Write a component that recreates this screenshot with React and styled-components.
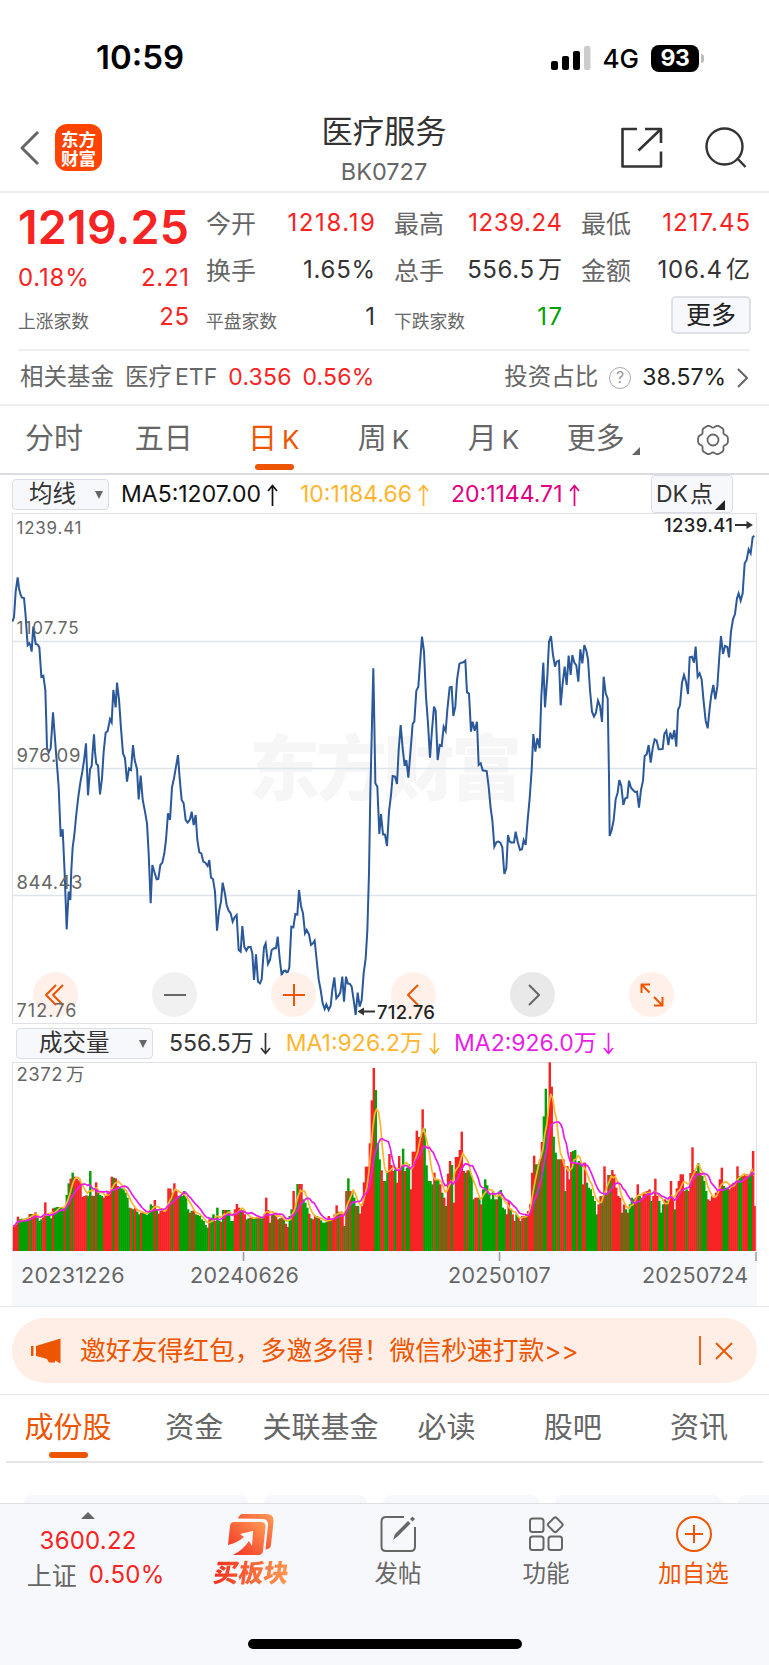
import React from "react";
import styled, { createGlobalStyle, css } from "styled-components";

const GlobalStyle = createGlobalStyle`
  * {
    box-sizing: border-box;
  }
  body {
    margin: 0;
    background: #fff;
    color: #333;
    font-family: Inter, "Noto Sans CJK SC", sans-serif;
  }
`;

const red = "#f82323";
const green = "#00a000";
const orange = "#ee5500";
const grey = "#666";

/* closing prices, three units per pixel */
const pricePoints = `
37,335 42,322 47,245 53,202 57,235 61,252 66,263 72,264 77,318 80,365 83,406 88,400 91,405 95,425 98,375
100,350 103,375 107,402 113,404 118,412 121,455 124,500 130,497 136,540 139,640 141,715 146,727 152,715
155,670 159,607 163,660 168,727 176,830 182,980 188,958 194,1090 200,1258 203,1200 206,1145 211,1170
214,1080 218,1012 223,975 229,912 235,860 241,818 247,785 252,752 258,700 261,780 264,856 270,778 275,768
279,710 282,673 285,725 289,762 294,766 300,853 306,805 311,725 317,668 323,663 330,627 335,637 340,540
347,592 351,518 357,568 363,655 369,730 375,745 381,815 387,775 393,780 399,705 404,750 411,777 416,868
422,797 428,868 435,905 441,940 446,1030 452,1180 457,1065 463,1085 470,1108 475,1107 481,1065 487,1058
493,1030 498,990 504,910 510,930 516,832 522,805 528,770 534,735 539,805 545,870 551,880 557,930 563,938
570,928 575,905 581,945 587,915 592,990 598,1027 604,1030 610,1055 616,1058 623,1068 628,1050 633,1103
639,1107 645,1145 651,1262 657,1205 663,1175 668,1118 675,1152 680,1185 686,1202 692,1210 698,1235
704,1222 710,1215 716,1320 722,1325 727,1248 733,1310 739,1322 745,1311 752,1311 757,1330 762,1410
768,1333 774,1415 780,1420 785,1408 792,1312 797,1300 804,1362 810,1350 815,1320 822,1315 828,1315
833,1280 839,1345 845,1395 851,1383 857,1382 862,1392 868,1372 874,1250 880,1252 886,1212 892,1214
897,1140 903,1188 909,1210 915,1270 920,1260 927,1273 933,1305 939,1300 944,1292 950,1350 956,1408
962,1440 968,1480 974,1497 979,1483 986,1500 992,1487 997,1440 1003,1402 1009,1465 1015,1458 1021,1447
1027,1400 1032,1475 1038,1400 1043,1420 1050,1422 1055,1430 1061,1470 1067,1515 1073,1448 1079,1490
1085,1470 1091,1390 1097,1345 1102,1262 1107,1090 1111,850 1116,640 1120,475 1123,640 1126,820 1132,830
1138,972 1143,912 1149,973 1155,974 1161,1008 1167,905 1173,855 1178,798 1185,800 1191,822 1196,720
1202,645 1208,715 1214,768 1219,750 1225,803 1231,730 1238,642 1243,634 1249,542 1255,530 1260,460
1266,380 1272,425 1278,560 1284,640 1290,743 1296,660 1302,590 1307,602 1313,750 1319,705 1325,708
1331,650 1337,663 1342,600 1349,532 1355,531 1360,618 1366,590 1371,510 1378,462 1384,458 1390,457
1396,452 1401,547 1407,551 1413,665 1418,635 1424,662 1431,635 1436,765 1442,760 1448,781 1454,782
1460,783 1466,830 1472,895 1477,930 1483,1010 1489,997 1495,995 1501,998 1507,1012 1513,1092 1519,1075
1524,975 1529,995 1535,998 1542,997 1547,965 1553,995 1560,1020 1566,1018 1571,990 1577,1005 1583,930
1589,865 1595,780 1600,672 1606,725 1612,685 1619,715 1624,560 1630,458 1635,592 1642,500 1647,395
1653,378 1659,435 1665,470 1670,455 1677,452 1682,586 1688,520 1694,470 1700,525 1706,437 1712,495
1717,435 1723,458 1729,466 1735,515 1741,418 1747,460 1753,405 1759,422 1764,448 1770,540 1776,605
1782,620 1788,608 1794,572 1800,588 1806,636 1811,500 1817,550 1823,565 1827,800 1829,978 1835,960
1841,930 1847,868 1853,848 1858,810 1864,828 1870,885 1876,865 1882,863 1887,812 1893,833 1899,840
1905,846 1911,845 1917,893 1923,840 1929,812 1934,738 1940,733 1946,705 1952,758 1958,715 1964,688
1970,692 1976,718 1982,718 1988,717 1993,672 1999,662 2005,705 2011,668 2017,688 2023,660 2029,710
2034,600 2040,586 2046,518 2052,495 2058,515 2064,552 2069,442 2076,440 2082,458 2087,410 2093,500
2099,490 2105,508 2111,575 2117,632 2123,655 2129,595 2134,555 2140,525 2146,568 2152,530 2158,440
2163,378 2169,432 2175,408 2182,411 2187,442 2193,365 2199,328 2205,312 2211,265 2216,250 2222,272
2228,250 2234,160 2240,150 2246,118 2252,130 2258,82 2263,77`;

/* traded volume per day, 566 is the full height of the panel */
const volumes = [
  75, 78, 103, 95, 97, 92, 95, 100, 111, 111, 111, 116, 100, 90, 95, 108, 146, 105, 105, 98,
  128, 130, 132, 132, 130, 128, 130, 168, 203, 217, 235, 223, 217, 212, 205, 162, 165, 167, 165, 240,
  166, 165, 206, 175, 168, 165, 160, 165, 180, 172, 223, 220, 218, 195, 190, 188, 185, 175, 160, 130,
  128, 125, 130, 118, 110, 115, 115, 115, 108, 115, 140, 135, 153, 125, 112, 120, 125, 118, 125, 188,
  187, 175, 203, 180, 165, 165, 165, 180, 165, 125, 115, 120, 122, 110, 108, 105, 95, 90, 78, 70,
  95, 100, 110, 90, 130, 90, 88, 123, 123, 123, 123, 90, 90, 125, 141, 130, 125, 122, 110, 95,
  98, 100, 102, 98, 100, 104, 100, 98, 110, 160, 123, 85, 110, 113, 115, 95, 98, 100, 95, 82,
  72, 105, 125, 180, 130, 201, 201, 201, 155, 145, 130, 112, 98, 95, 105, 105, 100, 92, 85, 85,
  88, 105, 95, 95, 110, 137, 118, 112, 112, 75, 180, 218, 180, 178, 160, 135, 135, 112, 135, 206,
  253, 253, 323, 452, 549, 483, 323, 275, 242, 210, 210, 240, 291, 258, 240, 245, 205, 285, 245, 307,
  240, 250, 260, 185, 298, 298, 361, 342, 342, 425, 367, 257, 210, 210, 200, 235, 215, 215, 200, 175,
  160, 135, 232, 270, 258, 145, 282, 282, 303, 358, 240, 235, 242, 242, 225, 155, 160, 160, 160, 140,
  185, 215, 197, 170, 155, 180, 155, 155, 178, 183, 130, 125, 110, 150, 125, 110, 90, 110, 100, 90,
  105, 105, 110, 120, 140, 235, 286, 260, 260, 275, 327, 404, 487, 404, 566, 493, 343, 295, 275, 275,
  275, 275, 180, 255, 215, 297, 300, 303, 262, 270, 265, 200, 265, 205, 190, 185, 165, 150, 110, 140,
  165, 165, 254, 170, 228, 228, 243, 230, 190, 165, 160, 115, 140, 125, 115, 140, 160, 155, 160, 200,
  165, 160, 175, 178, 180, 185, 150, 165, 217, 165, 150, 115, 140, 155, 150, 155, 210, 160, 125, 188,
  210, 230, 230, 180, 185, 180, 234, 311, 242, 240, 263, 235, 225, 210, 180, 155, 150, 165, 160, 175,
  182, 215, 250, 195, 190, 188, 185, 200, 205, 205, 254, 225, 225, 225, 230, 230, 225, 240, 300, 135,
];

/* days on which the bars change colour, the first run is red */
const flips = [
  3, 8, 9, 10, 12, 15, 17, 20, 21, 26, 27, 29, 30, 31, 38, 40, 41, 42, 43, 46, 51, 52, 54, 60, 61, 62,
  63, 65, 66, 72, 73, 74, 81, 82, 85, 90, 91, 92, 93, 100, 101, 103, 104, 106, 107, 108, 109, 113, 116,
  117, 119, 121, 122, 125, 126, 128, 131, 132, 133, 134, 136, 137, 138, 139, 141, 143, 144, 146, 148,
  151, 152, 153, 155, 156, 157, 161, 162, 163, 166, 167, 169, 170, 171, 172, 173, 175, 176, 177, 185,
  188, 190, 192, 195, 196, 199, 200, 201, 203, 210, 215, 216, 218, 219, 220, 221, 222, 224, 225, 231,
  232, 233, 236, 238, 239, 240, 247, 248, 252, 254, 255, 257, 258, 259, 260, 262, 263, 267, 268, 269,
  270, 271, 273, 276, 278, 279, 280, 282, 283, 286, 288, 289, 291, 293, 299, 301, 302, 303, 304, 305,
  306, 311, 312, 313, 314, 315, 318, 320, 321, 326, 327, 330, 333, 334, 335, 338, 339, 344, 345, 350,
  351, 352, 355, 363, 366, 371, 373, 376, 378,
];
const dayColor = (i) => (flips.filter((f) => f <= i).length % 2 ? green : "#f62424");

const step = 743 / volumes.length;

const average = (count) =>
  volumes
    .map((_, i) => {
      const part = volumes.slice(Math.max(0, i - count + 1), i + 1);
      const mean = part.reduce((a, b) => a + b, 0) / part.length;
      return `${((i + 0.5) * step).toFixed(1)},${(189 - mean / 3).toFixed(1)}`;
    })
    .join(" ");

const gearPath =
  "M" +
  Array(72)
    .fill(0)
    .map((_, i) => {
      const a = (i * Math.PI) / 36;
      const r = 14.1 + 1.3 * Math.cos(6 * a) - 0.5 * Math.cos(12 * a);
      return `${(17 + r * Math.cos(a)).toFixed(2)} ${(17 + r * Math.sin(a)).toFixed(2)}`;
    })
    .join("L") +
  "Z";

const Screen = styled.div`
  width: 769px;
  height: 1665px;
  display: flex;
  flex-direction: column;
  overflow: hidden;
  background: #fff;
  white-space: nowrap;
`;

const Text = styled.span`
  font-size: ${({ size }) => size || 24}px;
  font-weight: ${({ weight }) => weight || 400};
  color: ${({ color }) => color || "#333"};
  letter-spacing: ${({ gap }) => gap || 0}px;
  margin-right: ${({ gap }) => -(gap || 0)}px;
  line-height: 1.2;
`;

const StatusBar = styled.div`
  height: 106px;
  flex: none;
  display: flex;
  align-items: center;
  justify-content: space-between;
  padding: 10px 65px 0 96px;
`;
const StatusIcons = styled.div`
  display: flex;
  align-items: center;
`;
const Network = styled(Text)`
  margin: 2px 12px 0 12px;
`;
const Battery = styled.div`
  width: 48px;
  height: 27px;
  border-radius: 8px;
  background: #000;
  color: #fff;
  font-size: 23px;
  font-weight: 700;
  letter-spacing: -0.5px;
  line-height: 27px;
  text-align: center;
`;
const BatteryTip = styled.div`
  width: 3px;
  height: 9px;
  margin-left: 2px;
  border-radius: 0 4px 4px 0;
  background: #bbb;
`;

const Header = styled.header`
  height: 87px;
  flex: none;
  display: grid;
  grid-template-columns: 1fr auto 1fr;
  align-items: center;
  padding: 0 22px 2px 19px;
  border-bottom: 2px solid #eee;
`;
const HeaderSide = styled.div`
  display: flex;
  align-items: center;
  justify-content: ${({ end }) => (end ? "flex-end" : "flex-start")};
  gap: ${({ end }) => (end ? 40 : 14)}px;
`;
const Logo = styled.div`
  width: 47px;
  height: 47px;
  display: flex;
  flex-direction: column;
  align-items: center;
  justify-content: center;
  border-radius: 12px;
  background: #ff4400;
  color: #fff;
  font-family: "Noto Sans CJK SC", sans-serif;
  font-size: 17.5px;
  font-weight: 700;
  line-height: 19px;
`;
const Title = styled.div`
  display: flex;
  flex-direction: column;
  align-items: center;
  gap: 7px;
  padding: 5px 0 0 2px;
`;

const Quote = styled.section`
  height: 158px;
  flex: none;
  display: grid;
  grid-template-columns: 169px 169px 168px 169px;
  column-gap: 19px;
  margin: 0 19px 0 18px;
  border-bottom: 2px solid #eee;
`;
const QuoteColumn = styled.div`
  display: grid;
  grid-template-rows: ${({ main }) => (main ? "63px 39px 39px" : "47px 47px 47px")};
  padding-top: ${({ main }) => (main ? 3 : 7)}px;
`;
const Cell = styled.div`
  display: flex;
  align-items: center;
  justify-content: space-between;
`;
const SmallLabel = styled.span`
  font-size: 17.8px;
  color: ${grey};
  padding-top: 5px;
`;
const MoreButton = styled.div`
  width: 80px;
  height: 38px;
  margin: 2px -1px 0 auto;
  border: 2px solid #dfdfe6;
  border-radius: 5px;
  background: #f7f8fb;
  color: #222;
  font-size: 25px;
  line-height: 34px;
  text-align: center;
`;

const Related = styled.section`
  height: 55px;
  flex: none;
  display: flex;
  align-items: center;
  justify-content: space-between;
  padding: 0 20px;
  border-bottom: 2px solid #eee;
`;
const Group = styled.div`
  display: flex;
  align-items: center;
  gap: ${({ space }) => space || 11}px;
`;
const Help = styled.span`
  width: 22px;
  height: 22px;
  border: 1.5px solid #aaa;
  border-radius: 50%;
  color: #999;
  font-size: 16px;
  line-height: 19px;
  text-align: center;
`;

const Tabs = styled.nav`
  height: ${({ height }) => height}px;
  flex: none;
  display: flex;
  align-items: stretch;
  margin: 0 ${({ inset }) => inset || 0}px;
  border-bottom: 2px solid ${({ line }) => line};
`;
const Tab = styled.div`
  position: relative;
  flex: 1;
  display: flex;
  align-items: center;
  justify-content: center;
  gap: 7px;
  padding-right: 2px;
  color: ${grey};
  font-size: 29px;
  line-height: 1.2;
  ${({ active }) =>
    active &&
    css`
      color: ${orange};
      &::after {
        content: "";
        position: absolute;
        left: 50%;
        bottom: 3px;
        width: 39px;
        height: 6px;
        margin-left: -20px;
        border-radius: 3px;
        background: ${orange};
      }
    `}
`;
const Latin = styled.span`
  font-size: 26px;
  margin-left: -2px;
  padding-top: 1px;
`;
const Corner = styled.i`
  border: ${({ size }) => size / 2}px solid transparent;
  border-right-color: ${({ color }) => color};
  border-bottom-color: ${({ color }) => color};
  margin-top: ${({ drop }) => drop || 0}px;
`;

const LegendRow = styled.div`
  height: ${({ height }) => height}px;
  flex: none;
  display: flex;
  align-items: center;
  padding: 0 12px;
`;
const Select = styled.div`
  width: ${({ width }) => width}px;
  height: 31px;
  display: flex;
  align-items: center;
  justify-content: space-between;
  padding: 1px 5px 0 ${({ inset }) => inset || 16}px;
  margin: 0 ${({ after }) => after}px 0 ${({ before }) => before || 0}px;
  border: 1.5px solid #dcdce4;
  border-radius: 4px;
  background: #f7f8fb;
  &::after {
    content: "";
    border: 4.5px solid transparent;
    border-top: 8px solid #666;
    border-bottom: 0;
  }
`;
const LegendItem = styled.div`
  display: flex;
  align-items: center;
  gap: 6px;
  margin-right: ${({ after }) => after || 0}px;
  padding-top: 2px;
  color: ${({ color }) => color};
  font-size: 23px;
  line-height: 1.2;
`;
const DkButton = styled.div`
  width: 82px;
  height: 38px;
  display: flex;
  align-items: center;
  gap: 2px;
  margin: 0 24px 0 auto;
  padding: 2px 0 0 4px;
  border: 1.5px solid #dcdce4;
  border-radius: 4px;
  background: #f7f8fb;
`;

const Panel = styled.div`
  position: relative;
  width: 745px;
  height: ${({ height }) => height}px;
  flex: none;
  margin-left: 12px;
  svg {
    display: block;
  }
`;
const ChartButtons = styled.div`
  position: absolute;
  left: 21px;
  bottom: 7px;
  display: flex;
  gap: 74.2px;
`;
const RoundButton = styled.div`
  width: 45px;
  height: 45px;
  border-radius: 50%;
  background: ${({ bg }) => bg};
`;
const Labels = styled.svg`
  position: absolute;
  inset: 0;
`;

const DateTicks = styled.div`
  height: 0;
  flex: none;
  margin-left: 12px;
  svg {
    display: block;
    position: relative;
  }
`;
const Dates = styled.div`
  height: 55px;
  flex: none;
  display: grid;
  grid-template-columns: 170px 212px 247px 116px;
  width: 745px;
  margin-left: 12px;
  background: #f7f8fb;
  padding-top: 12px;
`;
const DateLabel = styled(Text)`
  padding-left: ${({ inset }) => inset}px;
`;

const BannerArea = styled.div`
  height: 89px;
  flex: none;
  padding: 11px 12px 0;
  border-top: 1.5px solid #e4e5e8;
  border-bottom: 1.5px solid #e4e5e8;
`;
const Banner = styled.div`
  height: 65px;
  display: flex;
  align-items: center;
  padding: 0 24px 0 19px;
  border-radius: 33px;
  background: #ffeee5;
`;
const BannerText = styled(Text)`
  flex: 1;
  margin-left: 18px;
  padding-top: 1px;
`;

const Chips = styled.div`
  flex: 1;
  display: flex;
  align-items: flex-end;
  gap: 16px;
  padding-left: 24px;
`;
const Chip = styled.div`
  width: ${({ width }) => width}px;
  height: 8px;
  flex: none;
  border-radius: 8px 8px 0 0;
  background: #f7f8fb;
`;

const Footer = styled.footer`
  height: 162px;
  flex: none;
  display: flex;
  flex-direction: column;
  align-items: center;
  justify-content: space-between;
  padding-bottom: 16px;
  border-top: 1.5px solid #dcdee2;
  background: #f7f8fb;
`;
const FooterItems = styled.div`
  width: 100%;
  display: grid;
  grid-template-columns: 176px 148px 148px 148px 147px;
`;
const FooterItem = styled.div`
  height: 90px;
  display: flex;
  flex-direction: column;
  align-items: center;
  gap: ${({ space }) => space || 0}px;
  padding-top: ${({ top }) => top || 9}px;
`;
const IndexValues = styled.div`
  display: flex;
  gap: 12px;
  padding: 5px 0 0 15px;
`;
const Up = styled.i`
  border: 7px solid transparent;
  border-bottom-color: ${grey};
  border-top: 0;
  margin-bottom: 8px;
`;
const BuyLabel = styled.span`
  margin-left: 3px;
  font-family: "Noto Sans CJK SC", sans-serif;
  font-size: 25px;
  font-weight: 900;
  line-height: 28px;
  transform: skewX(-8deg);
  background: linear-gradient(90deg, #f2301e, #ff9a50);
  background-clip: text;
  color: transparent;
`;
const HomeBar = styled.div`
  width: 274px;
  height: 10px;
  border-radius: 5px;
  background: #000;
`;

const Stroke = ({ w, h, d, color = "#666", width = 2, children }) => (
  <svg width={w} height={h} fill="none" stroke={color} strokeWidth={width}>
    {d && <path d={d} strokeLinejoin="round" />}
    {children}
  </svg>
);

const Legend = ({ color, after, down, children }) => (
  <LegendItem color={color} after={after}>
    {children}
    <Stroke
      w={11}
      h={23}
      color={color}
      width={1.7}
      d={down ? "M5.5 0V20M1 15L5.5 20.5L10 15" : "M5.5 22V2M1 7L5.5 1.5L10 7"}
    />
  </LegendItem>
);

const quotes = [
  [
    { label: "今开", value: "1218.19", color: red, gap: 1.6 },
    { label: "换手", value: "1.65%", gap: 0.7 },
    { label: "平盘家数", value: "1" },
  ],
  [
    { label: "最高", value: "1239.24", color: red, gap: 0.6 },
    { label: "总手", value: "556.5", unit: "万", gap: 0.6 },
    { label: "下跌家数", value: "17", color: green, gap: 1.5 },
  ],
  [
    { label: "最低", value: "1217.45", color: red, gap: 1 },
    { label: "金额", value: "106.4", unit: "亿", gap: 0.8 },
  ],
];

const chartLabels = [
  ["1239.41", 20.5, 17, 65],
  ["1107.75", 121, 17, 62],
  ["976.09", 249, 18.5, 64],
  ["844.43", 376, 18.5, 66],
  ["712.76", 503.5, 18, 60],
];

const peach = "#fff0e9";
const chartButtons = [
  [peach, orange, "M23 13L13 23L23 33M30 13L20 23L30 33"],
  ["#f1f1f1", grey, "M12 23H34"],
  [peach, orange, "M12 23H34M23 12V34"],
  [peach, orange, "M27 13L17 23L27 33"],
  ["#e9e9e9", grey, "M19 13L29 23L19 33"],
  [peach, orange, "M21 12.5H12.5V21M12.5 12.5L20.5 20.5M25 25L33 33M33.5 25V33.5H25"],
];

const PriceChart = () => (
  <Panel height={511}>
    <svg width="745" height="511">
      <rect x="0.5" y="0.5" width="744" height="510" fill="#fff" stroke="#dfe1e6" />
      <text
        x="237"
        y="281"
        fontFamily="Noto Sans CJK SC"
        fontSize="71"
        fontWeight="900"
        fill="#f6f6f6"
        textLength="273"
      >
        东方财富
      </text>
      {[128.5, 255.5, 382.5].map((y) => (
        <path key={y} d={`M0 ${y}H745`} stroke="#dde4ec" strokeWidth="1.5" />
      ))}
      <polyline
        points={pricePoints}
        transform="translate(-12 -3) scale(.33333)"
        fill="none"
        stroke="#2a5899"
        strokeWidth="6"
      />
    </svg>
    <ChartButtons>
      {chartButtons.map(([bg, color, d]) => (
        <RoundButton key={d} bg={bg}>
          <Stroke w={45} h={45} d={d} color={color} />
        </RoundButton>
      ))}
    </ChartButtons>
    <Labels width="745" height="511">
      {chartLabels.map(([label, y, size, width]) => (
        <text key={label} x="4.5" y={y} fontSize={size} fill={grey} textLength={width}>
          {label}
        </text>
      ))}
      <text x="652" y="18.5" fontSize="18.5" fontWeight="500" fill="#222" textLength="69">
        1239.41
      </text>
      <path d="M723 12H738" stroke="#333" strokeWidth="2" />
      <path d="M734.5 8L741 12L734.5 16Z" fill="#333" />
      <text x="365" y="505.5" fontSize="18.5" fontWeight="500" fill="#222" textLength="58">
        712.76
      </text>
      <path d="M349 498.5H363" stroke="#333" strokeWidth="2" />
      <path d="M352 494.5L345.5 498.5L352 502.5Z" fill="#333" />
    </Labels>
  </Panel>
);

const VolumeChart = () => (
  <Panel height={189}>
    <svg width="745" height="189">
      <rect x="0.5" y="0.5" width="744" height="190" fill="#fff" stroke="#dfe1e6" />
      {volumes.map((value, i) => (
        <rect
          key={i}
          x={0.8 + i * step}
          y={189 - value / 3}
          width={i < volumes.length - 1 ? step + 0.5 : step}
          height={value / 3}
          fill={dayColor(i)}
        />
      ))}
      <g fill="none" strokeWidth="1.7" strokeLinejoin="round">
        <polyline points={average(5)} stroke="#ffb52e" />
        <polyline points={average(10)} stroke="#e81ee8" />
      </g>
      <text x="4.5" y="19" fontSize="18.5" fill={grey} textLength="46">
        2372
      </text>
      <text x="54" y="19" fontSize="18.5" fill={grey}>
        万
      </text>
    </svg>
  </Panel>
);

const App = () => {
  return (
    <Screen>
      <GlobalStyle />
      <StatusBar>
        <Text size={33} weight={600} color="#000">
          10:59
        </Text>
        <StatusIcons>
          <svg width="40" height="25">
            <rect x="0" y="15" width="7" height="9" rx="2" />
            <rect x="11" y="10" width="7" height="14" rx="2" />
            <rect x="22" y="5" width="7" height="19" rx="2" />
            <rect x="33" y="0" width="6.5" height="24" rx="2" fill="#ccc" />
          </svg>
          <Network size={26} weight={500} color="#000">
            4G
          </Network>
          <Battery>93</Battery>
          <BatteryTip />
        </StatusIcons>
      </StatusBar>

      <Header>
        <HeaderSide>
          <Stroke w={22} h={36} d="M19 2L3 18L19 34" width={3} />
          <Logo>
            <span>东方</span>
            <span>财富</span>
          </Logo>
        </HeaderSide>
        <Title>
          <Text size={31.3}>医疗服务</Text>
          <Text size={23.5} color={grey}>
            BK0727
          </Text>
        </Title>
        <HeaderSide end>
          <Stroke
            w={44}
            h={42}
            d="M17 2H2.5V39.5H41V24.5M25 2H41V16M18.5 23.5L41 2"
            color="#333"
            width={2.6}
          />
          <Stroke w={43} h={42} color="#333" width={2.4} d="M33 31L41.5 40">
            <circle cx="20.5" cy="19.5" r="18" />
          </Stroke>
        </HeaderSide>
      </Header>

      <Quote>
        <QuoteColumn main>
          <Cell>
            <Text size={46.5} weight={600} color={red} gap={0.2}>
              1219.25
            </Text>
          </Cell>
          <Cell>
            <Text color={red} gap={0.8}>
              0.18%
            </Text>
            <Text color={red} gap={0.7}>
              2.21
            </Text>
          </Cell>
          <Cell>
            <SmallLabel>上涨家数</SmallLabel>
            <Text color={red} gap={0.5}>
              25
            </Text>
          </Cell>
        </QuoteColumn>
        {quotes.map((column, i) => (
          <QuoteColumn key={i}>
            {column.map(({ label, value, color, gap, unit }) => (
              <Cell key={label}>
                {label.length > 2 ? (
                  <SmallLabel>{label}</SmallLabel>
                ) : (
                  <Text size={25} color={grey}>
                    {label}
                  </Text>
                )}
                <Group space={4}>
                  <Text color={color} gap={gap}>
                    {value}
                  </Text>
                  {unit && <Text>{unit}</Text>}
                </Group>
              </Cell>
            ))}
            {column.length === 2 && <MoreButton>更多</MoreButton>}
          </QuoteColumn>
        ))}
      </Quote>

      <Related>
        <Group>
          <Text size={23.5} color={grey}>
            相关基金
          </Text>
          <Group space={3}>
            <Text size={23.5} color={grey}>
              医疗
            </Text>
            <Text size={23} color={grey}>
              ETF
            </Text>
          </Group>
          <Text size={23} color={red} gap={0.2}>
            0.356
          </Text>
          <Text size={23} color={red} gap={0.2}>
            0.56%
          </Text>
        </Group>
        <Group>
          <Text size={23.5} color={grey}>
            投资占比
          </Text>
          <Help>?</Help>
          <Text size={23} color="#222">
            38.57%
          </Text>
          <Stroke w={12} h={20} d="M1 1L10 10L1 19" />
        </Group>
      </Related>

      <Tabs height={69} line="#dadbe3">
        <Tab>分时</Tab>
        <Tab>五日</Tab>
        <Tab active>
          日<Latin>K</Latin>
        </Tab>
        <Tab>
          周<Latin>K</Latin>
        </Tab>
        <Tab>
          月<Latin>K</Latin>
        </Tab>
        <Tab>
          更多
          <Corner size={8} color={grey} drop={22} />
        </Tab>
        <Tab>
          <Stroke w={34} h={34} d={gearPath} width={1.8}>
            <circle cx="17" cy="17" r="5.5" />
          </Stroke>
        </Tab>
      </Tabs>

      <LegendRow height={38}>
        <Select width={97} after={12}>
          <Text size={23.5}>均线</Text>
        </Select>
        <Legend color="#111" after={22}>
          MA5:1207.00
        </Legend>
        <Legend color="#ffb52e" after={22}>
          10:1184.66
        </Legend>
        <Legend color="#e0007f">20:1144.71</Legend>
        <DkButton>
          <Text size={23}>DK</Text>
          <Text size={23}>点</Text>
          <Corner size={11} color="#222" drop={20} />
        </DkButton>
      </LegendRow>
      <PriceChart />
      <LegendRow height={38}>
        <Select width={137} inset={22} before={4} after={16}>
          <Text size={23.5}>成交量</Text>
        </Select>
        <Legend down color="#333" after={15}>
          556.5万
        </Legend>
        <Legend down color="#ffb52e" after={14}>
          MA1:926.2万
        </Legend>
        <Legend down color="#e81ee8">
          MA2:926.0万
        </Legend>
      </LegendRow>
      <VolumeChart />
      <DateTicks>
        <svg width="745" height="10">
          <path d="M231.5 1V10M487.5 1V10M744 1V10" stroke="#999" strokeWidth="1.5" />
        </svg>
      </DateTicks>
      <Dates>
        <DateLabel size={21.5} color={grey} gap={0.3} inset={9}>
          20231226
        </DateLabel>
        <DateLabel size={21.5} color={grey} gap={0.3} inset={8}>
          20240626
        </DateLabel>
        <DateLabel size={21.5} color={grey} gap={0.3} inset={54}>
          20250107
        </DateLabel>
        <DateLabel size={21.5} color={grey} gap={0.2} inset={1}>
          20250724
        </DateLabel>
      </Dates>

      <BannerArea>
        <Banner>
          <svg width="31" height="26" fill={orange}>
            <path d="M0 8H2.5V18H0ZM5 8L29.5 0.5V25.5L24 22.5V24.5H18L16 21L11 19.5L5 18Z" />
          </svg>
          <BannerText size={25.8} color={orange}>
            邀好友得红包，多邀多得！微信秒速打款&gt;&gt;
          </BannerText>
          <Stroke w={34} h={30} color={orange} width={1.8} d="M1 0V29M17 7L33 23M33 7L17 23" />
        </Banner>
      </BannerArea>

      <Tabs height={68} inset={6} line="#e4e5e8">
        <Tab active>成份股</Tab>
        <Tab>资金</Tab>
        <Tab>关联基金</Tab>
        <Tab>必读</Tab>
        <Tab>股吧</Tab>
        <Tab>资讯</Tab>
      </Tabs>
      <Chips>
        <Chip width={224} />
        <Chip width={103} />
        <Chip width={156} />
        <Chip width={167} />
        <Chip width={60} />
      </Chips>

      <Footer>
        <FooterItems>
          <FooterItem top={8}>
            <Up />
            <Text color={red} gap={0.2}>
              3600.22
            </Text>
            <IndexValues>
              <Text size={25} color={grey}>
                上证
              </Text>
              <Text color={red} gap={0.3}>
                0.50%
              </Text>
            </IndexValues>
          </FooterItem>
          <FooterItem>
            <svg width="48" height="44" viewBox="0 0 48 44">
              <defs>
                <linearGradient id="buy" x1="0" y1="1" x2="1" y2="0">
                  <stop offset="0" stopColor="#f22c20" />
                  <stop offset="1" stopColor="#ff9c55" />
                </linearGradient>
              </defs>
              <path
                fill="url(#buy)"
                d="M12 5.5Q13 1 17.5 1H41Q48 1 47.5 9L45 32Q44.5 36 39.5 36.5L42 12.5Q42.5 6 36.5 6Z"
              />
              <path
                fill="url(#buy)"
                d="M8 9H35Q40 9 39.5 14L37 38Q36.5 42 32.5 42H7Q17 37 23 28L26 33L27 18L14 21L18 24Q11 30 2 32L4 13Q4.5 9 8 9Z"
              />
            </svg>
            <BuyLabel>买板块</BuyLabel>
          </FooterItem>
          <FooterItem space={5}>
            <Stroke w={40} h={42}>
              <path d="M26 4H8Q3.5 4 3.5 8.5V33.5Q3.5 38 8 38H32.5Q37 38 37 33.5V14" />
              <path
                d="M15 27L17 21L30 8L32.5 10.5L19.5 23.5ZM32 6L34.5 3.5L37 6L34.5 8.5Z"
                fill={grey}
                stroke="none"
              />
            </Stroke>
            <Text size={23.5} color={grey}>
              发帖
            </Text>
          </FooterItem>
          <FooterItem space={5}>
            <Stroke w={40} h={42}>
              <rect x="4" y="5.5" width="13.5" height="13.5" rx="2.5" />
              <rect x="4" y="23.5" width="13.5" height="13.5" rx="2.5" />
              <rect x="22.5" y="23.5" width="13.5" height="13.5" rx="2.5" />
              <rect
                x="23.5"
                y="6"
                width="11.5"
                height="11.5"
                rx="2"
                transform="rotate(45 29.25 11.75)"
              />
            </Stroke>
            <Text size={23.5} color={grey}>
              功能
            </Text>
          </FooterItem>
          <FooterItem space={5}>
            <Stroke w={40} h={42} color={orange} d="M11 21H29M20 12V30">
              <circle cx="20" cy="21" r="17" />
            </Stroke>
            <Text size={23.5} color={orange}>
              加自选
            </Text>
          </FooterItem>
        </FooterItems>
        <HomeBar />
      </Footer>
    </Screen>
  );
};

export default App;
